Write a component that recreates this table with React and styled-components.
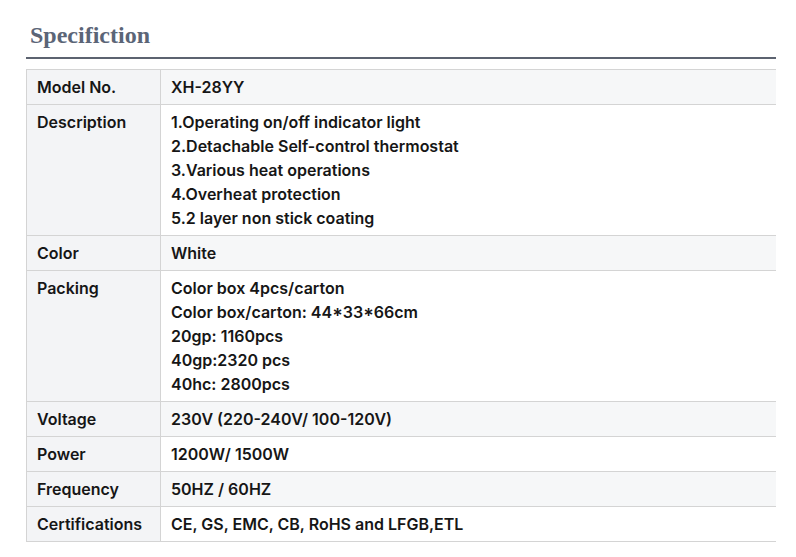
import React from 'react';
import styled, { createGlobalStyle } from 'styled-components';

const GlobalStyle = createGlobalStyle`
  body {
    margin: 0;
    background: #ffffff;
  }
`;

const Page = styled.div`
  padding: 20px 0 0 26px;
  width: 750px;
`;

const Title = styled.h2`
  margin: 0;
  padding-left: 4px;
  font-family: 'Liberation Serif', 'Times New Roman', serif;
  font-weight: 700;
  font-size: 24px;
  line-height: 30px;
  color: #5b6577;
`;

const Rule = styled.div`
  height: 2px;
  margin-top: 7px;
  background: #5c6370;
`;

const Table = styled.table`
  margin-top: 10px;
  width: 100%;
  border-collapse: collapse;
  font-family: Inter, 'Noto Sans', sans-serif;
  font-size: 16px;
  font-weight: 600;
  line-height: 24px;
  color: #161616;
`;

const Row = styled.tr`
  background: ${(p) => (p.$shaded ? '#f6f7f8' : '#ffffff')};
`;

const Label = styled.td`
  width: 112px;
  padding: 5px 11px 5px 10px;
  vertical-align: top;
  background: #f3f4f6;
  border: 1px solid #d4d4d4;
  white-space: nowrap;
`;

const Value = styled.td`
  padding: 5px 11px 5px 10px;
  vertical-align: top;
  border: 1px solid #d4d4d4;
  border-right: none;
`;

const Line = styled.div``;

const specs = [
  { label: 'Model No.', lines: ['XH-28YY'] },
  {
    label: 'Description',
    lines: [
      '1.Operating on/off indicator light',
      '2.Detachable Self-control thermostat',
      '3.Various heat operations',
      '4.Overheat protection',
      '5.2 layer non stick coating',
    ],
  },
  { label: 'Color', lines: ['White'] },
  {
    label: 'Packing',
    lines: [
      'Color box 4pcs/carton',
      'Color box/carton: 44*33*66cm',
      '20gp: 1160pcs',
      '40gp:2320 pcs',
      '40hc: 2800pcs',
    ],
  },
  { label: 'Voltage', lines: ['230V (220-240V/ 100-120V)'] },
  { label: 'Power', lines: ['1200W/ 1500W'] },
  { label: 'Frequency', lines: ['50HZ / 60HZ'] },
  { label: 'Certifications', lines: ['CE, GS, EMC, CB, RoHS and LFGB,ETL'] },
];

const App = () => (
  <>
    <GlobalStyle />
    <Page>
      <Title>Specifiction</Title>
      <Rule />
      <Table>
        <tbody>
          {specs.map((spec, index) => (
            <Row key={spec.label} $shaded={index % 2 === 0}>
              <Label>{spec.label}</Label>
              <Value>
                {spec.lines.map((line) => (
                  <Line key={line}>{line}</Line>
                ))}
              </Value>
            </Row>
          ))}
        </tbody>
      </Table>
    </Page>
  </>
);

export default App;
